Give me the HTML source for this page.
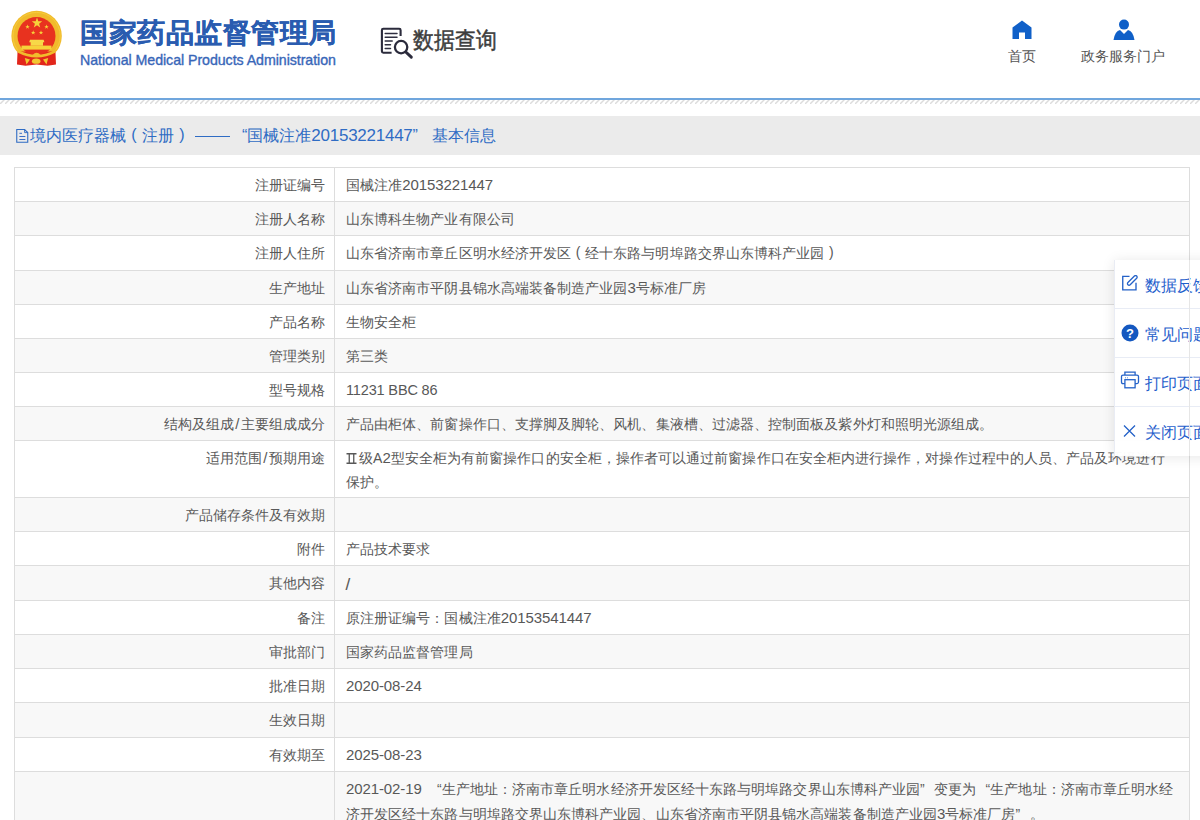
<!DOCTYPE html>
<html><head><meta charset="utf-8">
<style>
*{box-sizing:border-box;margin:0;padding:0}
html,body{width:1200px;height:820px;overflow:hidden;background:#fff}
body{font-family:"Liberation Sans",sans-serif;color:#585858;position:relative}
.abs{position:absolute}
#title{left:80px;top:14.5px;font-size:28px;font-weight:bold;color:#2a5cb0;letter-spacing:0.5px;white-space:nowrap;line-height:36px;transform:scaleY(0.96);transform-origin:0 29px;-webkit-text-stroke:0.3px #2a5cb0}
#en{left:80px;top:50px;font-size:14.2px;color:#3866b8;white-space:nowrap;line-height:20px;-webkit-text-stroke:0.35px #3866b8;letter-spacing:-0.05px}
#sjcx{left:413px;top:25.5px;font-size:21px;color:#3d3d3d;line-height:30px;white-space:nowrap;transform:scaleY(1.1);transform-origin:0 25px;-webkit-text-stroke:0.45px #3d3d3d}
.nav{font-size:14px;color:#555;line-height:18px;white-space:nowrap}
#line{left:0;top:98px;width:1200px;height:2px;background:#70a6dd}
#bar{left:0;top:116px;width:1200px;height:39px;background:#ebebeb}
#bartxt{left:30px;top:125px;font-size:16px;color:#2f6cc4;line-height:22px;white-space:nowrap}
#bartxt span{display:inline-block}
.r{position:absolute;left:14px;width:1176px;border:1px solid #ddd;border-bottom:none;background:#fff}
.r.g{background:#f8f8f8}
.k{position:absolute;left:0;top:0;bottom:0;width:320px;border-right:1px solid #ddd;text-align:right;padding:4.5px 9px 0 0;font-size:14px;line-height:24px;white-space:nowrap}
.v{position:absolute;left:320px;top:0;right:0;padding:4.5px 0 0 11px;font-size:14px;line-height:24px;white-space:nowrap;letter-spacing:0.07px}
.n{font-size:15px;letter-spacing:-0.1px;line-height:1}
.m{font-size:14.5px;letter-spacing:-0.15px}
.qo{display:inline-block;width:14px;text-align:right}
.qc{display:inline-block;width:14px;text-align:left}
.r2{display:inline-block;width:13px;vertical-align:-1px}
.r2 svg{display:block}
#panel{left:1114px;top:260px;width:120px;height:196px;border-left:1px solid #e9ecf4;background:rgba(255,255,255,0.97);box-shadow:0 1px 12px rgba(0,0,0,0.10)}
.pi{position:absolute;left:-1px;width:120px;height:49px;border-bottom:1px solid #e8ecf5;font-size:16px;color:#1f60cc;white-space:nowrap}
.pi span{position:absolute;left:31px;top:15px;line-height:22px}
.po{display:inline-block;width:14px;text-align:center;position:relative;top:-0.5px}
.sl{display:inline-block;width:7.5px;text-align:center;font-size:15px;line-height:1}
.sl2{font-size:17px;line-height:1;position:relative;left:-0.5px;top:2px;-webkit-text-stroke:0.1px #585858}

</style></head><body>
<svg class="abs" style="left:0;top:0" width="70" height="70" viewBox="0 0 70 70">
  <defs><clipPath id="ct"><rect x="0" y="0" width="70" height="51.5"/></clipPath></defs>
  <path d="M17.6 50 L55.4 50 L56 64.5 L47.5 65.8 L36.5 64.6 L25.5 65.8 L17 64.5 Z" fill="#e2261b"/>
  <circle cx="36.6" cy="36" r="25.2" fill="#f1bb2c" clip-path="url(#ct)"/>
  <circle cx="36.6" cy="36" r="23.6" fill="none" stroke="#f5cc3c" stroke-width="1" clip-path="url(#ct)"/>
  <circle cx="36.5" cy="36" r="19" fill="#e8321f"/>
  <polygon points="37,17.5 38.3,21.2 42.2,21.3 39.1,23.7 40.2,27.5 37,25.3 33.8,27.5 34.9,23.7 31.8,21.3 35.7,21.2" fill="#f6d23a"/>
  <polygon points="27.5,24.6 28.1,26.2 29.7,26.2 28.4,27.2 28.9,28.8 27.5,27.8 26.1,28.8 26.6,27.2 25.3,26.2 26.9,26.2" fill="#f6d23a"/>
  <polygon points="46.5,24.6 47.1,26.2 48.7,26.2 47.4,27.2 47.9,28.8 46.5,27.8 45.1,28.8 45.6,27.2 44.3,26.2 45.9,26.2" fill="#f6d23a"/>
  <polygon points="33.2,30.3 33.8,31.9 35.4,31.9 34.1,32.9 34.6,34.5 33.2,33.5 31.8,34.5 32.3,32.9 31,31.9 32.6,31.9" fill="#f6d23a"/>
  <polygon points="41,30.3 41.6,31.9 43.2,31.9 41.9,32.9 42.4,34.5 41,33.5 39.6,34.5 40.1,32.9 38.8,31.9 40.4,31.9" fill="#f6d23a"/>
  <path d="M29.2 42.2 L30 39.8 H43.6 L44.4 42.2 H43 V45.8 H30.6 V42.2 Z" fill="#f7d848"/>
  <rect x="21.5" y="45.6" width="30" height="4" fill="#f6d23a"/>
  <path d="M17.4 49.5 Q36.6 60 55.8 49.5 L55.8 52.5 Q36.6 62.5 17.4 52.5 Z" fill="#f1bb2c"/>
  <path d="M32.5 55.2 Q36.6 50.5 40.7 55.2 Z" fill="#f1bb2c"/>
  <ellipse cx="36.2" cy="61.2" rx="4.3" ry="2.6" fill="#f2c631"/>
  <path d="M24.8 58 L30 59.5 L26.5 64.5 Z M48.2 58 L43 59.5 L46.5 64.5 Z" fill="#f2c631"/>
</svg>
<div id="title" class="abs">国家药品监督管理局</div>
<div id="en" class="abs">National Medical Products Administration</div>
<svg class="abs" style="left:0;top:0" width="420" height="62" viewBox="0 0 420 62">
  <path d="M391.6 52.7 H383.3 Q381.9 52.7 381.9 51.3 V30.2 Q381.9 28.8 383.3 28.8 H399.2 Q400.6 28.8 400.6 30.2 V36.1" fill="none" stroke="#2b2b3c" stroke-width="2.1"/>
  <path d="M385.2 33.5 H397 M385.2 37.3 H397 M385.2 41 H392.2 M385.2 44.7 H390.5 M385.2 48.5 H390.5" stroke="#2f2f40" stroke-width="1.5" stroke-linecap="round"/>
  <circle cx="401.1" cy="47.1" r="6.2" fill="none" stroke="#2b2b3c" stroke-width="2.3"/>
  <path d="M405.8 52 L411.3 57.2" stroke="#2b2b3c" stroke-width="3" stroke-linecap="round"/>
</svg>
<div id="sjcx" class="abs">数据查询</div>
<svg class="abs" style="left:1012px;top:20px" width="20" height="19" viewBox="0 0 20 19">
  <path d="M10 0.5 L19.5 7.5 V19 H13 V12.5 H7 V19 H0.5 V7.5 Z" fill="#1060c8"/>
</svg>
<div class="abs nav" style="left:1008px;top:46.5px">首页</div>
<svg class="abs" style="left:1113px;top:19px" width="22" height="21" viewBox="0 0 22 21">
  <circle cx="11" cy="5.6" r="5" fill="#1060c8"/>
  <path d="M0.5 21 Q2 12 7 11 L11 15 L15 11 Q20 12 21.5 21 Z" fill="#1060c8"/>
</svg>
<div class="abs nav" style="left:1081px;top:46.5px">政务服务门户</div>
<div id="line" class="abs"></div>
<svg class="abs" style="left:0;top:100px" width="1200" height="4">
  <defs><pattern id="hp" width="5" height="4" patternUnits="userSpaceOnUse"><path d="M-1 5 L5 -1" stroke="#dcdcdc" stroke-width="1.4"/></pattern></defs>
  <rect width="1200" height="4" fill="url(#hp)"/>
</svg>
<div id="bar" class="abs"></div>
<svg class="abs" style="left:16px;top:128px" width="13" height="16" viewBox="0 0 13 16">
  <path d="M0.75 1.5 H8.6 L11.75 4.6 V14.25 H0.75 Z" fill="none" stroke="#2f6cc4" stroke-width="1.1"/>
  <path d="M8.6 1.5 V4.6 H11.75" fill="none" stroke="#2f6cc4" stroke-width="0.9"/>
  <path d="M3.4 5.3 H6 M3.4 8.5 H9.4 M3.4 11.5 H9.4" stroke="#3b6fc6" stroke-width="1"/>
</svg>
<div id="bartxt" class="abs">境内医疗器械<span style="width:16px;text-align:center;position:relative;top:-1px">(</span>注册<span style="width:16px;text-align:center;position:relative;top:-1px">)</span><span style="width:52px;position:relative;top:-5px"><span style="position:absolute;left:5px;top:0;width:35px;height:1.3px;background:#2f6cc4"></span></span>“国械注准<span class="n" style="font-size:17px;letter-spacing:-0.25px">20153221447</span>”<span style="width:14px"></span>基本信息</div>
<div class="r" style="top:167px;height:34px"><div class="k">注册证编号</div><div class="v">国械注准<span class="n">20153221447</span></div></div>
<div class="r g" style="top:201px;height:34px"><div class="k">注册人名称</div><div class="v">山东博科生物产业有限公司</div></div>
<div class="r" style="top:235px;height:35px"><div class="k">注册人住所</div><div class="v">山东省济南市章丘区明水经济开发区<span class="po">(</span>经十东路与明埠路交界山东博科产业园<span class="po">)</span></div></div>
<div class="r g" style="top:270px;height:34px"><div class="k">生产地址</div><div class="v">山东省济南市平阴县锦水高端装备制造产业园<span class="n">3</span>号标准厂房</div></div>
<div class="r" style="top:304px;height:34px"><div class="k">产品名称</div><div class="v">生物安全柜</div></div>
<div class="r g" style="top:338px;height:34px"><div class="k">管理类别</div><div class="v">第三类</div></div>
<div class="r" style="top:372px;height:34px"><div class="k">型号规格</div><div class="v"><span class="m">11231 BBC 86</span></div></div>
<div class="r g" style="top:406px;height:34px"><div class="k">结构及组成<span class="sl">/</span>主要组成成分</div><div class="v">产品由柜体、前窗操作口、支撑脚及脚轮、风机、集液槽、过滤器、控制面板及紫外灯和照明光源组成。</div></div>
<div class="r" style="top:440px;height:57px"><div class="k">适用范围<span class="sl">/</span>预期用途</div><div class="v" style="padding-top:4.5px"><span class="r2"><svg width="11" height="11" viewBox="0 0 11 11"><path d="M0.5 0.75H10.5M0.5 10.25H10.5M3.25 0.75V10.25M7.75 0.75V10.25" stroke="#585858" stroke-width="1.3" fill="none"/></svg></span>级A<span class="n">2</span>型安全柜为有前窗操作口的安全柜，操作者可以通过前窗操作口在安全柜内进行操作，对操作过程中的人员、产品及环境进行<br>保护。</div></div>
<div class="r g" style="top:497px;height:34px"><div class="k">产品储存条件及有效期</div><div class="v"></div></div>
<div class="r" style="top:531px;height:34px"><div class="k">附件</div><div class="v">产品技术要求</div></div>
<div class="r g" style="top:565px;height:35px"><div class="k">其他内容</div><div class="v"><span class="sl2">/</span></div></div>
<div class="r" style="top:600px;height:34px"><div class="k">备注</div><div class="v">原注册证编号：国械注准<span class="n">20153541447</span></div></div>
<div class="r g" style="top:634px;height:34px"><div class="k">审批部门</div><div class="v">国家药品监督管理局</div></div>
<div class="r" style="top:668px;height:34px"><div class="k">批准日期</div><div class="v"><span class="n">2020-08-24</span></div></div>
<div class="r g" style="top:702px;height:35px"><div class="k">生效日期</div><div class="v"></div></div>
<div class="r" style="top:737px;height:34px"><div class="k">有效期至</div><div class="v"><span class="n">2025-08-23</span></div></div>
<div class="r g" style="top:771px;height:69px"><div class="k"></div><div class="v" style="padding-top:4.5px;line-height:25px"><span class="n">2021-02-19</span><span style="display:inline-block;width:2px"></span> <span class="qo">“</span>生产地址：济南市章丘明水经济开发区经十东路与明埠路交界山东博科产业园<span class="qc">”</span>变更为<span class="qo">“</span>生产地址：济南市章丘明水经<br>济开发区经十东路与明埠路交界山东博科产业园、山东省济南市平阴县锦水高端装备制造产业园<span class="n">3</span>号标准厂房<span class="qc">”</span>。</div></div>
<div id="panel" class="abs">
  <div class="pi" style="top:0"><svg class="abs" style="left:7px;top:15px" width="18" height="17" viewBox="0 0 18 17"><path d="M8.5 1.4 H1.75 V14.9 H15 V7.75" fill="none" stroke="#2462c8" stroke-width="1.35"/><rect x="-6.2" y="-1.6" width="12.4" height="3.2" rx="1.6" transform="translate(11.3,5.4) rotate(-45)" fill="none" stroke="#2462c8" stroke-width="1.3"/></svg><span>数据反馈</span></div>
  <div class="pi" style="top:49px"><svg class="abs" style="left:7px;top:15px" width="18" height="18" viewBox="0 0 18 18"><circle cx="9" cy="9" r="8.5" fill="#1458c0"/><text x="9" y="13.5" font-size="13" font-weight="bold" fill="#fff" text-anchor="middle" font-family="Liberation Sans">?</text></svg><span>常见问题</span></div>
  <div class="pi" style="top:98px"><svg class="abs" style="left:6px;top:13px" width="20" height="18" viewBox="0 0 20 18"><path d="M4.9 4.6 V1.2 H15.1 V4.6 M4.9 12.6 H3 Q1.5 12.6 1.5 11.1 V5.6 Q1.5 4.2 3 4.2 H17 Q18.5 4.2 18.5 5.6 V11.1 Q18.5 12.6 17 12.6 H15.1" fill="none" stroke="#2462c8" stroke-width="1.3"/><rect x="4.9" y="8.7" width="10.2" height="8.1" fill="none" stroke="#2462c8" stroke-width="1.3"/><path d="M5 6.8 H5.8 M7 6.8 H7.8" stroke="#2462c8" stroke-width="0.9"/></svg><span>打印页面</span></div>
  <div class="pi" style="top:147px;border-bottom:none"><svg class="abs" style="left:9px;top:18px" width="13" height="12" viewBox="0 0 13 12"><path d="M1 0.5 L12 11.5 M12 0.5 L1 11.5" stroke="#2462c8" stroke-width="1.3"/></svg><span>关闭页面</span></div>
  <div class="abs" style="left:74px;top:0;width:1px;height:196px;background:#e6e6e6"></div>
</div>

</body></html>
